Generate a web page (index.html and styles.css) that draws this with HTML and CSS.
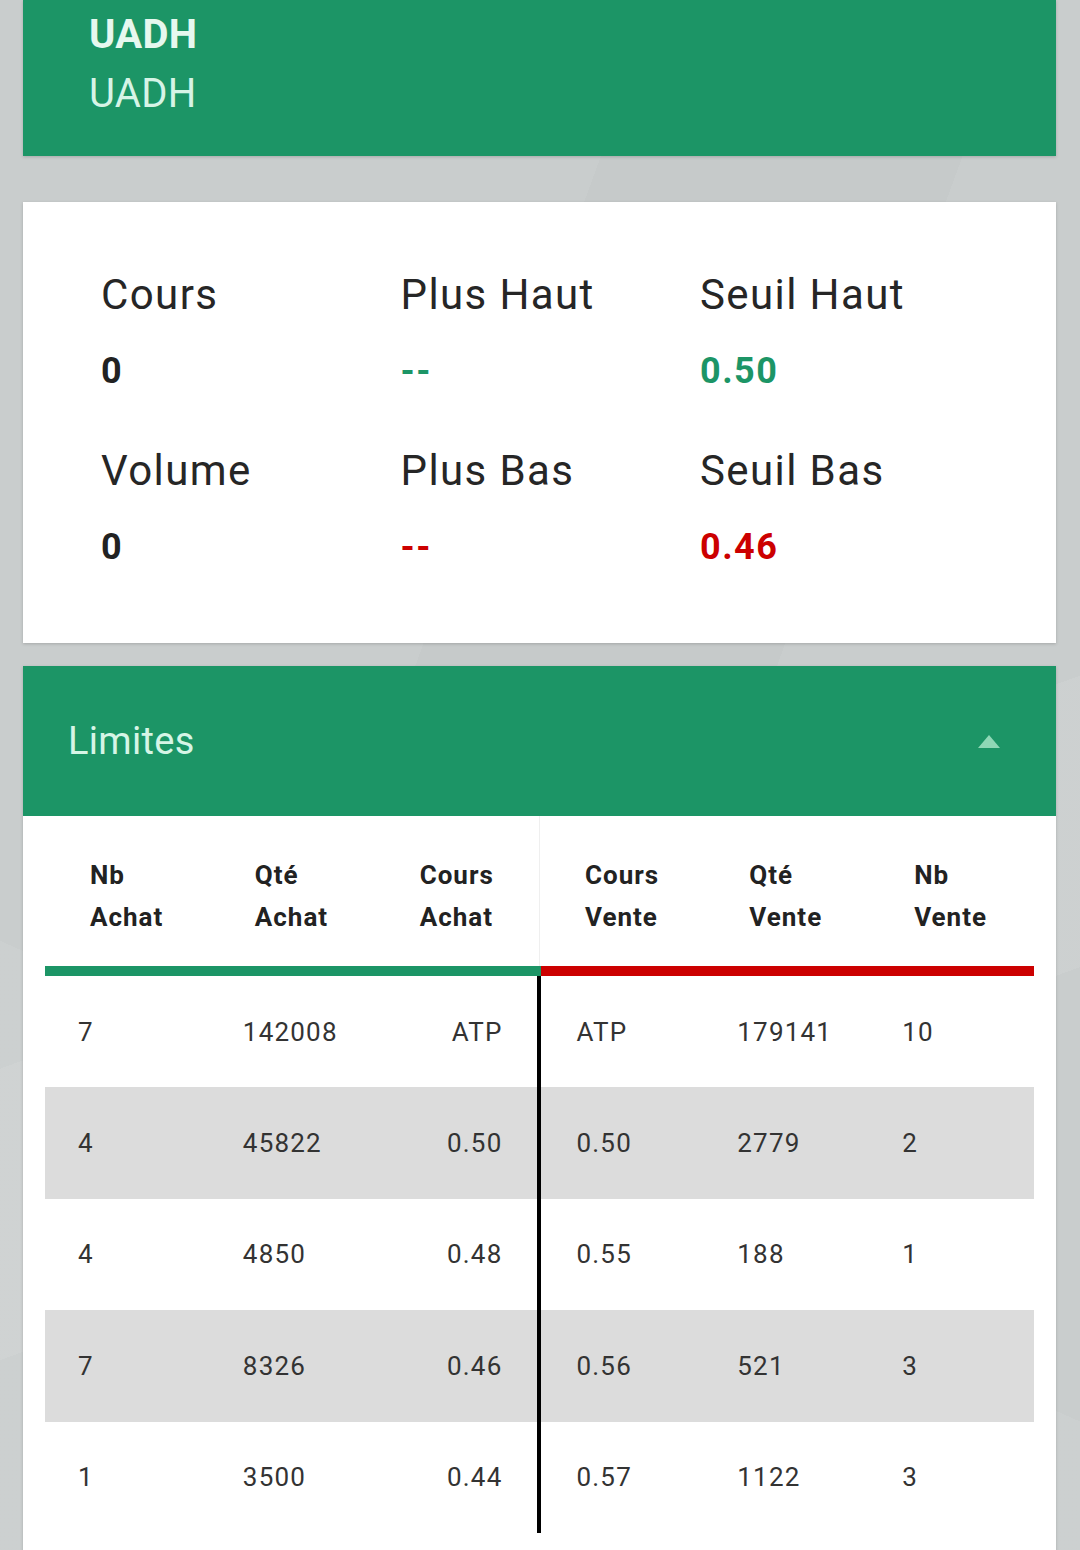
FILE: index.html
```html
<!DOCTYPE html>
<html lang="fr">
<head>
  <meta charset="UTF-8">
  <meta name="viewport" content="width=device-width, initial-scale=1.0">
  <title>UADH</title>
  <link rel="stylesheet" href="styles.css">
</head>
<body>
  <div class="page">
    <div class="card title-card">
      <div class="ticker">UADH</div>
      <div class="name">UADH</div>
    </div>

    <div class="card stats-card">
      <div class="stat">
        <div class="label">Cours</div>
        <div class="value">0</div>
      </div>
      <div class="stat">
        <div class="label">Plus Haut</div>
        <div class="value up">--</div>
      </div>
      <div class="stat">
        <div class="label">Seuil Haut</div>
        <div class="value up">0.50</div>
      </div>
      <div class="stat">
        <div class="label">Volume</div>
        <div class="value">0</div>
      </div>
      <div class="stat">
        <div class="label">Plus Bas</div>
        <div class="value down">--</div>
      </div>
      <div class="stat">
        <div class="label">Seuil Bas</div>
        <div class="value down">0.46</div>
      </div>
    </div>

    <div class="card limits-card">
      <div class="limits-head">
        <span class="limits-title">Limites</span>
        <svg class="caret" width="22" height="13" viewBox="0 0 22 13">
          <polygon points="11,0 22,13 0,13" fill="#8fd8b6"/>
        </svg>
      </div>
      <div class="limits-body">
        <table class="book">
          <thead>
            <tr>
              <th class="buy">Nb<br>Achat</th>
              <th class="buy">Qté<br>Achat</th>
              <th class="buy">Cours<br>Achat</th>
              <th class="sell split">Cours<br>Vente</th>
              <th class="sell">Qté<br>Vente</th>
              <th class="sell">Nb<br>Vente</th>
            </tr>
          </thead>
          <tbody>
            <tr>
              <td>7</td><td>142008</td><td class="price-buy">ATP</td>
              <td class="price-sell">ATP</td><td>179141</td><td>10</td>
            </tr>
            <tr>
              <td>4</td><td>45822</td><td class="price-buy">0.50</td>
              <td class="price-sell">0.50</td><td>2779</td><td>2</td>
            </tr>
            <tr>
              <td>4</td><td>4850</td><td class="price-buy">0.48</td>
              <td class="price-sell">0.55</td><td>188</td><td>1</td>
            </tr>
            <tr>
              <td>7</td><td>8326</td><td class="price-buy">0.46</td>
              <td class="price-sell">0.56</td><td>521</td><td>3</td>
            </tr>
            <tr>
              <td>1</td><td>3500</td><td class="price-buy">0.44</td>
              <td class="price-sell">0.57</td><td>1122</td><td>3</td>
            </tr>
          </tbody>
        </table>
      </div>
    </div>
  </div>
</body>
</html>
```

FILE: styles.css
```css
body {
  margin: 0;
  padding: 0;
  font-family: Roboto, 'Noto Sans', sans-serif;
  background-color: #c9cdcd;
  background-image:
    linear-gradient(160deg, transparent 55%, rgba(255, 255, 255, 0.07) 55%, rgba(255, 255, 255, 0.07) 70%, transparent 70%),
    linear-gradient(24deg, rgba(255, 255, 255, 0.06) 30%, transparent 30%),
    linear-gradient(110deg, transparent 40%, rgba(0, 0, 0, 0.015) 40%, rgba(0, 0, 0, 0.015) 62%, transparent 62%);
  height: 1550px;
  overflow: hidden;
}
.page {
  padding: 0 24px 0 23px;
}
.card {
  background: #fff;
  box-shadow: 0 1px 3px rgba(0, 0, 0, 0.18);
}

/* title */
.title-card {
  background: #1c9566;
  height: 156px;
  box-sizing: border-box;
  padding: 5px 0 0 66px;
  font-size: 40px;
  line-height: 59px;
  letter-spacing: 0.3px;
}
.ticker {
  font-weight: 700;
  color: #e6f8ef;
}
.name {
  color: #d6f4e6;
}

/* stats */
.stats-card {
  margin-top: 46px;
  padding: 68px 0 71px 78px;
  display: grid;
  grid-template-columns: 299.5px 299.5px 299.5px;
  row-gap: 50px;
}
.label {
  font-size: 42px;
  line-height: 50px;
  letter-spacing: 1.4px;
  color: #262626;
}
.value {
  margin-top: 26px;
  font-size: 36px;
  line-height: 50px;
  letter-spacing: 1.5px;
  font-weight: 700;
  color: #222;
}
.value.up {
  color: #1c9566;
}
.value.down {
  color: #cc0000;
}

/* limites */
.limits-card {
  margin-top: 23px;
}
.limits-head {
  background: #1c9566;
  height: 150px;
  display: flex;
  align-items: center;
  justify-content: space-between;
  padding: 0 56px 0 45px;
}
.limits-title {
  font-size: 38px;
  letter-spacing: 0.3px;
  color: #d6f5e6;
}
.limits-body {
  padding: 0 22px 60px 22px;
}
.book {
  width: 100%;
  table-layout: fixed;
  border-collapse: collapse;
}
.book th {
  height: 150px;
  box-sizing: border-box;
  padding: 38px 4px 28px 45px;
  text-align: left;
  vertical-align: top;
  font-size: 26px;
  line-height: 42px;
  letter-spacing: 1px;
  font-weight: 700;
  color: #222;
}
.book th.buy {
  border-bottom: 10px solid #1c9566;
}
.book th.sell {
  border-bottom: 10px solid #cc0000;
}
.book th.split {
  border-left: 1px solid #efefef;
}
.book td {
  height: 111.4px;
  padding: 0 4px 0 33px;
  font-size: 26px;
  letter-spacing: 1.2px;
  color: #333;
  vertical-align: middle;
}
.book tbody tr:nth-child(even) td {
  background: #dcdcdc;
}
.book td.price-buy {
  text-align: right;
  padding-right: 35px;
}
.book td.price-sell {
  border-left: 4px solid #000;
  padding-left: 35px;
}
```
